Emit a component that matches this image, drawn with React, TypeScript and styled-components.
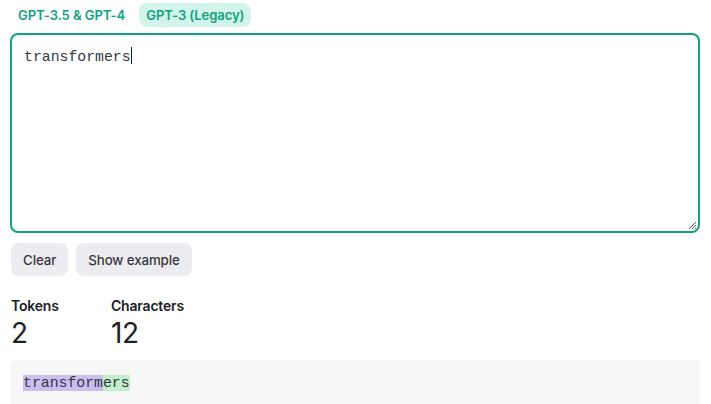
import React from "react";
import styled, { createGlobalStyle } from "styled-components";

const Global = createGlobalStyle`
  html, body { margin: 0; padding: 0; background: #fff; }
  body { font-family: Inter, "Noto Sans", Arial, sans-serif; color: #202123; }
  * { box-sizing: border-box; }
`;

const Page = styled.div`
  width: 711px;
  height: 404px;
  overflow: hidden;
  padding: 3px 11px 0 10px;
  display: flex;
  flex-direction: column;
  & > * { flex-shrink: 0; }
`;

const Tabs = styled.div`
  display: flex;
  gap: 7px;
  height: 24px;
  padding-left: 1px;
`;

const Tab = styled.button<{ $active?: boolean }>`
  border: none;
  margin: 0;
  font-family: Inter, "Noto Sans", Arial, sans-serif;
  font-size: 13.1px;
  font-weight: 600;
  letter-spacing: -0.1px;
  color: #10a37f;
  background: ${(p) => (p.$active ? "#d2f4ea" : "transparent")};
  border-radius: 8px;
  padding: 0 7px;
  height: 24px;
  line-height: 24px;
  cursor: pointer;
`;

const Editor = styled.div`
  margin-top: 6px;
  height: 200px;
  border: 2px solid #10a37f;
  border-radius: 8px;
  padding: 12px 12px;
  font-family: "Liberation Mono", "DejaVu Sans Mono", monospace;
  font-size: 14.8px;
  color: #353740;
  position: relative;
`;

const Caret = styled.span`
  display: inline-block;
  width: 1px;
  height: 17px;
  background: #202123;
  vertical-align: -3px;
`;

const Grip = styled.svg`
  position: absolute;
  right: 1px;
  bottom: 1px;
`;

const Buttons = styled.div`
  display: flex;
  gap: 8px;
  margin-top: 10px;
  padding-left: 1px;
`;

const Btn = styled.button`
  border: none;
  margin: 0;
  height: 33px;
  padding: 0 12px;
  border-radius: 8px;
  background: #ececf1;
  color: #353740;
  font-family: Inter, "Noto Sans", Arial, sans-serif;
  font-size: 13.3px;
  font-weight: 500;
  letter-spacing: -0.1px;
`;

const Stats = styled.div`
  display: flex;
  gap: 48px;
  margin-top: 21px;
  padding-left: 1px;
`;

const Stat = styled.div`
  display: flex;
  flex-direction: column;
  min-width: 52px;
`;

const Label = styled.div`
  font-size: 14px;
  font-weight: 600;
  letter-spacing: -0.2px;
  color: #202123;
  line-height: 18px;
`;

const Value = styled.div`
  font-size: 28px;
  font-weight: 400;
  color: #202123;
  line-height: 34px;
  margin-top: 1px;
  letter-spacing: -0.5px;
`;

const Output = styled.div`
  margin-top: 10px;
  background: #f7f7f8;
  border-radius: 4px 4px 0 0;
  height: 60px;
  padding: 14px 13px;
  font-family: "Liberation Mono", "DejaVu Sans Mono", monospace;
  font-size: 14.8px;
  color: #353740;
  line-height: 18px;
`;

const Token = styled.span<{ $bg: string }>`
  background: ${(p) => p.$bg};
`;

export default function App() {
  return (
    <>
      <Global />
      <Page>
        <Tabs>
          <Tab>GPT-3.5 &amp; GPT-4</Tab>
          <Tab $active>GPT-3 (Legacy)</Tab>
        </Tabs>
        <Editor>
          transformers<Caret />
          <Grip width="10" height="10" viewBox="0 0 10 10">
            <path d="M9 2 L2 9 M9 5 L5 9 M9 8 L8 9" stroke="#555" strokeWidth="1" />
          </Grip>
        </Editor>
        <Buttons>
          <Btn>Clear</Btn>
          <Btn>Show example</Btn>
        </Buttons>
        <Stats>
          <Stat>
            <Label>Tokens</Label>
            <Value>2</Value>
          </Stat>
          <Stat>
            <Label>Characters</Label>
            <Value>12</Value>
          </Stat>
        </Stats>
        <Output>
          <Token $bg="#cbbdf0">transform</Token>
          <Token $bg="#c2efcb">ers</Token>
        </Output>
      </Page>
    </>
  );
}
